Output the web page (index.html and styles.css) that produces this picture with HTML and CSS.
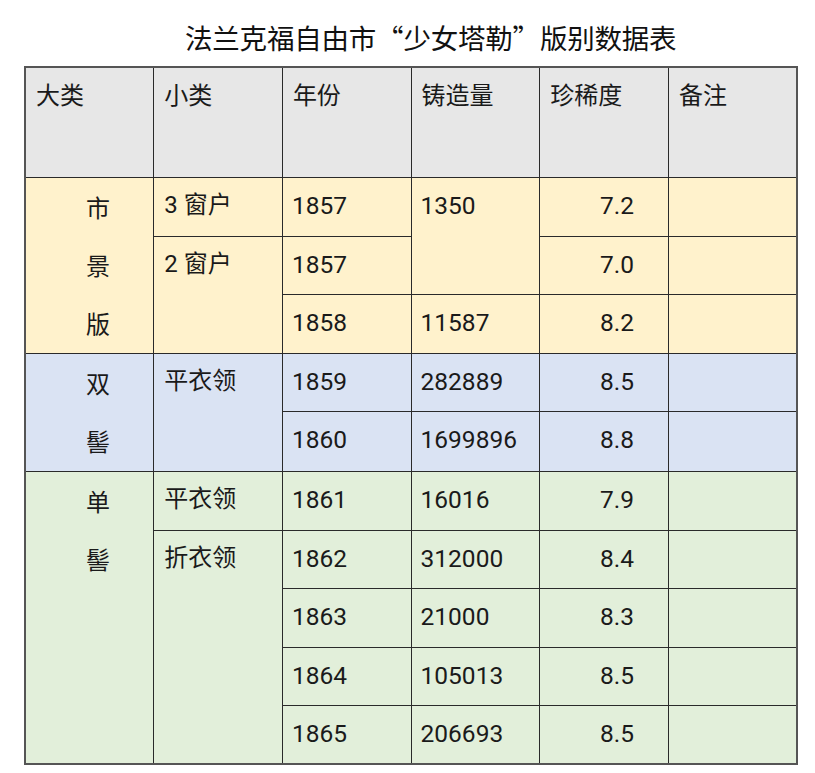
FILE: index.html
```html
<!DOCTYPE html>
<html lang="zh-CN">
<head>
<meta charset="utf-8">
<title>法兰克福自由市“少女塔勒”版别数据表</title>
<link rel="stylesheet" href="styles.css">
</head>
<body>
<div class="page">
  <h1 class="title">法兰克福自由市“少女塔勒”版别数据表</h1>
  <table class="data">
    <colgroup>
      <col><col><col><col><col><col>
    </colgroup>
    <thead>
      <tr class="head">
        <th>大类</th><th>小类</th><th>年份</th><th>铸造量</th><th>珍稀度</th><th>备注</th>
      </tr>
    </thead>
    <tbody>
      <tr class="yellow tall">
        <td rowspan="3" class="cat">市<br>景<br>版</td>
        <td>3 窗户</td>
        <td class="num">1857</td>
        <td rowspan="2" class="num">1350</td>
        <td class="rate">7.2</td>
        <td></td>
      </tr>
      <tr class="yellow">
        <td rowspan="2">2 窗户</td>
        <td class="num">1857</td>
        <td class="rate">7.0</td>
        <td></td>
      </tr>
      <tr class="yellow tall">
        <td class="num">1858</td>
        <td class="num">11587</td>
        <td class="rate">8.2</td>
        <td></td>
      </tr>
      <tr class="blue">
        <td rowspan="2" class="cat">双<br>髻</td>
        <td rowspan="2">平衣领</td>
        <td class="num">1859</td>
        <td class="num">282889</td>
        <td class="rate">8.5</td>
        <td></td>
      </tr>
      <tr class="blue tall">
        <td class="num">1860</td>
        <td class="num">1699896</td>
        <td class="rate">8.8</td>
        <td></td>
      </tr>
      <tr class="green tall">
        <td rowspan="5" class="cat">单<br>髻</td>
        <td>平衣领</td>
        <td class="num">1861</td>
        <td class="num">16016</td>
        <td class="rate">7.9</td>
        <td></td>
      </tr>
      <tr class="green">
        <td rowspan="4">折衣领</td>
        <td class="num">1862</td>
        <td class="num">312000</td>
        <td class="rate">8.4</td>
        <td></td>
      </tr>
      <tr class="green tall">
        <td class="num">1863</td>
        <td class="num">21000</td>
        <td class="rate">8.3</td>
        <td></td>
      </tr>
      <tr class="green">
        <td class="num">1864</td>
        <td class="num">105013</td>
        <td class="rate">8.5</td>
        <td></td>
      </tr>
      <tr class="green tall">
        <td class="num">1865</td>
        <td class="num">206693</td>
        <td class="rate">8.5</td>
        <td></td>
      </tr>
    </tbody>
  </table>
</div>
</body>
</html>
```

FILE: styles.css
```css
html, body {
  margin: 0;
  padding: 0;
  background: #ffffff;
}

body {
  font-family: Roboto, "Noto Sans CJK SC", sans-serif;
  color: #1a1a1a;
}

.page {
  width: 815px;
  height: 773px;
  padding: 0 0 0 24px;
  box-sizing: border-box;
}

.title {
  margin: 0;
  padding: 19px 0 0 161px;
  height: 66px;
  box-sizing: border-box;
  font-family: "Noto Sans CJK SC", sans-serif;
  font-weight: 400;
  font-size: 27.5px;
  line-height: 36px;
  letter-spacing: -0.2px;
  color: #111;
  white-space: nowrap;
}

.data {
  border-collapse: collapse;
  table-layout: fixed;
  width: 774px;
  border: 2px solid #555;
  font-size: 24px;
}

.data col {
  width: 128.7px;
}

.data th,
.data td {
  border: 1px solid #2a2a2a;
  padding: 0 0 0 10px;
  line-height: 55px;
  vertical-align: top;
  text-align: left;
  font-weight: 400;
  white-space: nowrap;
  overflow: hidden;
}

.data th {
  font-family: "Noto Sans CJK SC", sans-serif;
  line-height: 52px;
}

.head {
  height: 110px;
  background: #e7e7e7;
}

.data tbody tr {
  height: 58px;
}

.data tbody tr.tall {
  height: 59px;
}

.data td.num {
  padding-left: 9px;
  font-size: 24.5px;
}

.data td.rate {
  text-align: right;
  padding: 0 34px 0 0;
  font-size: 24.5px;
}

.data td.cat {
  padding-left: 60px;
  line-height: 58.4px;
  font-family: "Noto Sans CJK SC", sans-serif;
}

.yellow { background: #fff2cc; }
.blue { background: #dae3f3; }
.green { background: #e2efda; }
```
